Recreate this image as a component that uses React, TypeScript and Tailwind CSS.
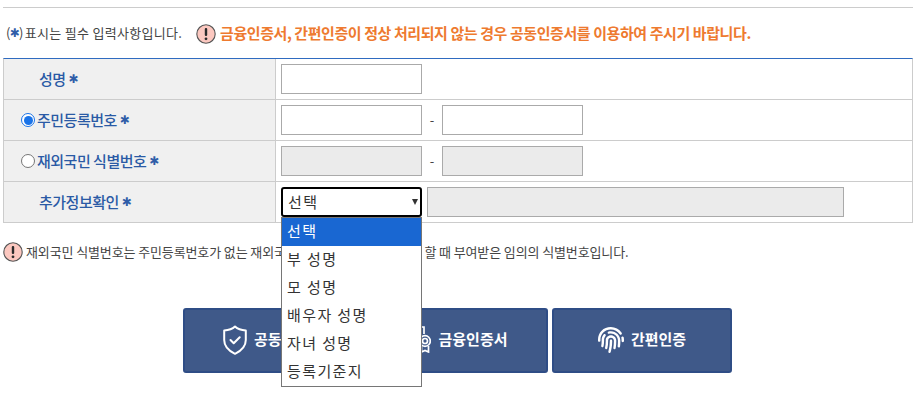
import { FaFingerprint } from 'react-icons/fa';

const FONT = "font-['Noto_Sans_CJK_KR','Noto_Sans',sans-serif]";

function Star({ className = 'ml-[3px]' }: { className?: string }) {
  return <span className={`font-['DejaVu_Sans',sans-serif] text-[12px] font-bold text-[#2f5da8] ${className}`}>✱</span>;
}

function Warn() {
  return (
    <svg width={20} height={20} viewBox="0 0 20 20" className="shrink-0">
      <circle cx="10" cy="10" r="9.2" fill="#fcc8c0" stroke="#555" strokeWidth="1.1" />
      <rect x="8.8" y="4" width="2.4" height="8" rx="1" fill="#2b2b2b" />
      <circle cx="10" cy="14.8" r="1.4" fill="#2b2b2b" />
    </svg>
  );
}

function Radio({ on }: { on: boolean }) {
  return (
    <span className={`mr-[2px] flex h-[14px] w-[14px] shrink-0 items-center justify-center rounded-full border bg-white ${on ? 'border-[#1a73e8]' : 'border-[#767676]'}`}>
      {on && <span className="h-[9px] w-[9px] rounded-full bg-[#1a73e8]" />}
    </span>
  );
}

function Input({ disabled }: { disabled?: boolean }) {
  return <div className={`h-[30px] w-[141px] border border-[#aaa] ${disabled ? 'bg-[#ebebeb]' : 'bg-white'}`} />;
}

function Row({ label, radio, children }: { label: string; radio?: 'on' | 'off'; children: React.ReactNode }) {
  return (
    <div className="flex h-[41px] border-b border-[#ccc]">
      <div className={`flex w-[272px] items-center border-r border-[#ccc] bg-[#f0f0f0] ${radio ? 'pl-[17px]' : 'pl-[35px]'}`}>
        {radio && <Radio on={radio === 'on'} />}
        <span className="text-[15px] font-medium tracking-[-0.5px] text-[#2a5aa5]">{label}</span>
        <Star />
      </div>
      <div className="flex flex-1 items-center pl-[5px]">{children}</div>
    </div>
  );
}

function Pair({ disabled }: { disabled?: boolean }) {
  return (
    <>
      <Input disabled={disabled} />
      <span className="w-[20px] text-center text-[13px] text-[#444]">-</span>
      <Input disabled={disabled} />
    </>
  );
}

function ShieldIcon() {
  return (
    <svg width="24" height="30" viewBox="0 0 24 30" fill="none" stroke="white" strokeWidth="2" strokeLinejoin="round" strokeLinecap="round">
      <path d="M12 1.5c2.5 2.4 6 3.7 10.8 4V15c0 6.5-4.5 10.8-10.8 13.8C5.700 25.800 1.200 21.500 1.200 15V5.500c4.800-.3 8.300-1.600 10.800-4z" />
      <path d="M7.500 15l3.200 3.200 6-6" />
    </svg>
  );
}

function CertIcon() {
  return (
    <svg width="24" height="27" viewBox="0 0 24 27" fill="none" stroke="white" strokeWidth="1.7">
      <path d="M10 21H1V1h16v7" />
      <circle cx="18" cy="15" r="5.300" />
      <circle cx="18" cy="15" r="2.500" />
      <path d="M14.500 20v6l3.500-1.500 3.500 1.500v-6" />
    </svg>
  );
}

function AuthButton({ icon, label }: { icon: React.ReactNode; label: string }) {
  return (
    <button className="flex h-[65px] w-[180px] items-center justify-center gap-[7px] rounded-[3px] border-2 border-[#2f4d86] bg-[#3f5989] pb-[2px] text-[15px] font-bold text-white">
      {icon}
      {label}
    </button>
  );
}

const OPTIONS = ['선택', '부 성명', '모 성명', '배우자 성명', '자녀 성명', '등록기준지'];

export default function App() {
  return (
    <div className={`relative h-[406px] w-[922px] overflow-hidden bg-white px-[3px] pt-[7px] ${FONT}`}>
      <div className="w-[910px] border-t border-[#ccc]" />

      {/* notice */}
      <div className="flex h-[50px] items-center pl-[3px]">
        <span className="flex w-[176px] items-center whitespace-nowrap text-[13px] tracking-[0.3px] text-[#444]">
          (<Star className="-mx-[1px]" />)<span className="ml-[1px]">표시는 필수 입력사항입니다.</span>
        </span>
        <span className="ml-[14px] mr-[4px] translate-y-[1px]"><Warn /></span>
        <span className="whitespace-nowrap text-[15px] font-bold tracking-[-0.42px] text-[#ee7a2f]">
          금융인증서, 간편인증이 정상 처리되지 않는 경우 공동인증서를 이용하여 주시기 바랍니다.
        </span>
      </div>

      {/* form */}
      <div className="w-[910px] border-x border-t border-x-[#ccc] border-t-[#2f6bc0]">
        <Row label="성명">
          <Input />
        </Row>
        <Row label="주민등록번호" radio="on">
          <Pair />
        </Row>
        <Row label="재외국민 식별번호" radio="off">
          <Pair disabled />
        </Row>
        <Row label="추가정보확인">
          <div className="relative flex h-[30px] w-[141px] items-center rounded-[3px] border-2 border-black bg-white pl-[5px] text-[15px] tracking-[1.4px] text-[#333]">
            선택
            <span className="absolute right-[2px] top-[10px] h-0 w-0 border-x-[3.5px] border-t-[6px] border-x-transparent border-t-[#333]" />
          </div>
          <div className="ml-[5px] h-[30px] w-[417px] border border-[#aaa] bg-[#ebebeb]" />
        </Row>
      </div>

      {/* help */}
      <div className="mt-[19px] flex items-center">
        <Warn />
        <span className="ml-[3px] whitespace-nowrap text-[13px] tracking-[-0.12px] text-[#444]">
          재외국민 식별번호는 주민등록번호가 없는 재외국민이 여권으로 본인확인을 할 때 부여받은 임의의 식별번호입니다.
        </span>
      </div>

      {/* buttons */}
      <div className="ml-[180px] mt-[46px] flex gap-[4.5px]">
        <AuthButton icon={<ShieldIcon />} label="공동인증서" />
        <AuthButton icon={<CertIcon />} label="금융인증서" />
        <AuthButton icon={<FaFingerprint size={26} />} label="간편인증" />
      </div>

      {/* open select list */}
      <ul className="absolute left-[281px] top-[217px] w-[141px] border border-[#767676] bg-white text-[15px] tracking-[1.4px] text-[#333]">
        {OPTIONS.map((o, i) => (
          <li key={o} className={`flex h-[28px] items-center pb-[2px] pl-[5px] ${i === 0 ? 'bg-[#1967d2] text-white' : ''}`}>
            {o}
          </li>
        ))}
      </ul>
    </div>
  );
}
